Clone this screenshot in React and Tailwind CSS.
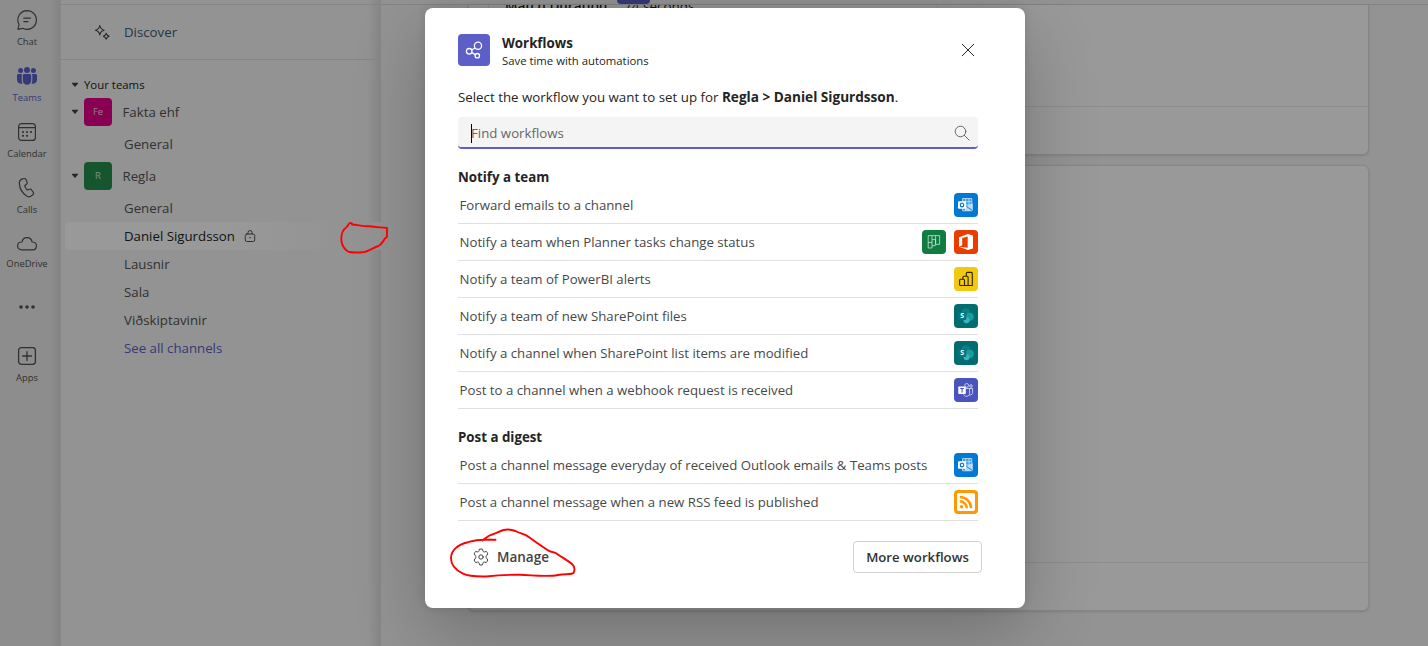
import React from "react";

const stroke = { fill: "none", stroke: "currentColor", strokeLinecap: "round", strokeLinejoin: "round" };

function ChatIcon() {
  return (
    <svg viewBox="0 0 20 20" className="size-5" {...stroke} strokeWidth="1.2">
      <path d="M10 .6a9.4 9.4 0 1 1-4.4 17.7L1 19.3l1-4.8A9.4 9.4 0 0 1 10 .6Z" />
      <path d="M6.8 8.2h6.6M6.8 11.6h4.2" />
    </svg>
  );
}

function TeamsIcon() {
  return (
    <svg viewBox="0 0 20 20" className="size-5" fill="currentColor">
      <circle cx="10" cy="4" r="3" />
      <circle cx="3.6" cy="4.6" r="2.5" />
      <circle cx="16.4" cy="4.6" r="2.5" />
      <path d="M7.4 8h5.2c.9 0 1.6.7 1.6 1.6v4.9a4.2 4.2 0 0 1-8.4 0V9.6C5.8 8.7 6.5 8 7.400 8Z" />
      <path d="M1.400 8h3.700c-.3.500-.4 1-.4 1.600v4.900c0 1.300.4 2.300 1 3.200C2.700 18.300 0 16.800 0 13.800V9.400C0 8.600.6 8 1.400 8ZM18.600 8h-3.700c.3.500.4 1 .4 1.600v4.900c0 1.300-.4 2.300-1 3.200 3 .6 5.700-.9 5.700-3.900V9.400c0-.8-.6-1.400-1.400-1.400Z" />
    </svg>
  );
}

function CalendarIcon() {
  return (
    <svg viewBox="0 0 20 20" className="size-5" {...stroke} strokeWidth="1.2">
      <rect x="1.600" y="1.600" width="16.800" height="16.800" rx="3" />
      <path d="M1.600 5.600h16.800" />
      <g fill="currentColor" stroke="none">
        <circle cx="6" cy="10" r="1.100" /><circle cx="10" cy="10" r="1.100" /><circle cx="14" cy="10" r="1.100" />
        <circle cx="6" cy="13.800" r="1.100" /><circle cx="10" cy="13.800" r="1.100" />
      </g>
    </svg>
  );
}

function CallsIcon() {
  return (
    <svg viewBox="0 0 20 20" className="size-5" {...stroke} strokeWidth="1.200">
      <path d="m5.400.9 1.400-.3c.9-.3 1.800.2 2.200 1l1 2.300c.3.800.1 1.700-.5 2.300L7.700 7.700c.3 1.600 1.300 3.200 2.600 4.300l2.200-.7c.8-.3 1.600 0 2.100.7l1.500 2c.6.800.5 1.800-.2 2.500l-.9.900c-1.300 1.400-3.300 1.900-5 .9C5.300 15.400 2.600 10.800 2.300 5.400 2.200 3.200 3.600 1.500 5.400.9Z" />
    </svg>
  );
}

function CloudIcon() {
  return (
    <svg viewBox="0 0 20 20" className="size-5" {...stroke} strokeWidth="1.200">
      <path d="M5 8c.4-2.700 2.500-4.400 5-4.400S14.700 5.300 15.100 8h.3c2.300 0 4 1.700 4 3.900s-1.700 3.900-4 3.900H4.600c-2.300 0-4-1.700-4-3.900S2.300 8 4.600 8H5Z" />
    </svg>
  );
}

function MoreIcon() {
  return (
    <svg viewBox="0 0 20 20" className="size-5" fill="currentColor">
      <circle cx="4" cy="10" r="1.800" /><circle cx="10" cy="10" r="1.800" /><circle cx="16" cy="10" r="1.800" />
    </svg>
  );
}

function AppsIcon() {
  return (
    <svg viewBox="0 0 20 20" className="size-5" {...stroke} strokeWidth="1.300">
      <rect x="1.600" y="1.600" width="16.800" height="16.800" rx="2.800" />
      <path d="M10 5.600v8.800M5.600 10h8.800" />
    </svg>
  );
}

function SparkleIcon() {
  return (
    <svg viewBox="0 0 16 16" className="size-4" {...stroke} strokeWidth="1.100">
      <path d="M5.800 1.500c.5 2.700 1.500 3.900 4.400 4.700-2.900.8-3.900 2-4.400 4.700C5.300 8.200 4.300 7 1.400 6.200c2.900-.8 3.900-2 4.400-4.700ZM12.200 9.300c.5 1.700 1.100 2.400 2.900 2.900-1.800.5-2.400 1.200-2.900 2.900-.5-1.700-1.100-2.400-2.900-2.900 1.800-.5 2.400-1.200 2.900-2.900Z" />
    </svg>
  );
}

function Caret() {
  return (
    <svg viewBox="0 0 8 6" className="h-1.5 w-2 shrink-0 text-[#424242]" fill="currentColor">
      <path d="M1.500.8h5c.5 0 .8.500.4.900L4.500 4.500a.7.700 0 0 1-1 0L1.100 1.700c-.4-.4-.1-.9.400-.9Z" />
    </svg>
  );
}

function LockIcon() {
  return (
    <svg viewBox="0 0 12 12" className="size-3" {...stroke} strokeWidth=".9">
      <rect x="1.300" y="4" width="9.400" height="7.500" rx="1.500" />
      <path d="M4 4V2.500a2 2 0 0 1 4 0V4M5.600 7.600h.8" />
    </svg>
  );
}

function FlowLogo() {
  return (
    <svg viewBox="0 0 32 32" className="size-8 shrink-0 rounded bg-[#5b5fc7]" fill="none" stroke="#fff" strokeWidth="1.300">
      <circle cx="20" cy="11.800" r="3.600" />
      <circle cx="11.200" cy="17.300" r="2.800" />
      <circle cx="19.300" cy="21.700" r="2.200" />
      <path d="m17 14-3.300 2M13.800 18.600l3.500 2" />
    </svg>
  );
}

function OutlookIcon() {
  return (
    <svg viewBox="0 0 24 24" className="size-6 rounded bg-[#0078d4]">
      <path d="M8.500 5.500h9.300v12.300H8.500Z" fill="#3f9ae0" />
      <path d="M8.500 5.500h9.300v12.300h-9.300ZM8.500 8.700h9.300M8.500 11.900h9.300M11.700 5.500v12M15 5.500v12" fill="none" stroke="#c5e2f7" strokeWidth=".8" />
      <path d="m11.500 13.500 7.300-3.200v7.500h-8Z" fill="#d8ebf9" opacity=".75" />
      <path d="m12.500 13.500 5.900 4" fill="none" stroke="#0078d4" strokeWidth=".9" />
      <rect x="4" y="8.200" width="8" height="7.600" rx=".8" fill="#fff" />
      <ellipse cx="8" cy="12" rx="1.700" ry="1.900" fill="none" stroke="#0078d4" strokeWidth="1.200" />
    </svg>
  );
}

function PlannerIcon() {
  return (
    <svg viewBox="0 0 24 24" className="size-6 rounded bg-[#107c41]" fill="none" stroke="#cbe5d6" strokeWidth=".8">
      <path d="M6.200 5.600h11.400v8.800h-4V9.600M6.200 5.600V18H10V5.600M10 9.600h3.600M13.600 5.600v8.800M6.200 12.500H10M10 15.700h3.200v-1.300M13.600 9.600h0" />
    </svg>
  );
}

function OfficeIcon() {
  return (
    <svg viewBox="0 0 24 24" className="size-6 rounded bg-[#eb3c00]">
      <path d="m5 7.300 8.800-3.400 5.200 1.600v13l-5.200 1.600L5 16.800l8.700 1V6.600L8.200 7.900v7.400L5 16.800Z" fill="#fff" />
    </svg>
  );
}

function PowerBiIcon() {
  return (
    <svg viewBox="0 0 24 24" className="size-6 rounded bg-[#f2c811]" fill="none" stroke="#2b2500" strokeWidth="1.100" strokeLinejoin="round">
      <path d="M12.300 9.200V6.400c0-.6.4-1 1-1h4c.6 0 1 .4 1 1v12.100H6.600c-.6 0-1-.4-1-1v-4.200c0-.6.4-1 1-1h2.300M8.900 12.300v-2.100c0-.6.400-1 1-1h3.200c.600 0 1 .400 1 1v8.300M8.900 12.300h.6c.600 0 1 .400 1 1v5.200" />
    </svg>
  );
}

function SharePointIcon() {
  return (
    <svg viewBox="0 0 24 24" className="size-6 rounded bg-[#036c70]">
      <circle cx="11.800" cy="8.700" r="4.500" fill="#0b7f83" />
      <circle cx="15.700" cy="12.800" r="4.100" fill="#1a9ba1" />
      <circle cx="12.500" cy="16.300" r="3" fill="#37b6c0" />
      <rect x="4.300" y="8" width="8" height="8" rx=".8" fill="#03787c" />
      <text x="8.300" y="14.400" textAnchor="middle" fontSize="7" fontWeight="700" fontFamily="Open Sans, sans-serif" fill="#fff">S</text>
    </svg>
  );
}

function TeamsAppIcon() {
  return (
    <svg viewBox="0 0 24 24" className="size-6 rounded bg-[#4b53bc]">
      <g fill="none" stroke="#d5d7f5" strokeWidth=".9">
        <circle cx="12.700" cy="7.400" r="1.900" />
        <circle cx="17" cy="8" r="1.300" />
        <path d="M12 10.500h3.600v4.700c0 2-1.200 3.100-3 3.100s-2.700-.8-3-2M15.600 10.500h3v4c0 1.800-1.200 2.700-3.100 2.500" />
      </g>
      <rect x="4.300" y="8.500" width="7.500" height="7.500" rx=".7" fill="#fff" />
      <path d="M6.200 10.500h3.700M8.050 10.500v4" stroke="#4b53bc" strokeWidth="1.100" />
    </svg>
  );
}

function RssIcon() {
  return (
    <svg viewBox="0 0 24 24" className="size-6 rounded bg-[#ff9900]">
      <rect x="3" y="3" width="18" height="18" rx="1.800" fill="#fff" />
      <circle cx="7.600" cy="16.700" r="1.800" fill="#ff9900" />
      <path d="M5.800 11.300a7 7 0 0 1 7 7M5.800 7a11.300 11.300 0 0 1 11.300 11.300" fill="none" stroke="#ff9900" strokeWidth="2.500" />
    </svg>
  );
}

function GearIcon() {
  return (
    <svg viewBox="0 0 20 20" className="size-5" {...stroke} strokeWidth="1">
      <circle cx="10" cy="10" r="2.200" />
      <path d="M8.500 2.200c1-.3 2-.3 3 0l.4 1.700c.2.800 1 1.200 1.700 1l1.700-.5c.7.700 1.200 1.500 1.500 2.500l-1.300 1.900c-.6.600-.6 1.700 0 2.300l1.300 1.900c-.3 1-.8 1.900-1.500 2.600l-1.700-.5c-.8-.200-1.500.300-1.700 1l-.4 1.700c-1 .3-2 .3-3 0l-.4-1.700c-.2-.7-1-1.200-1.700-1l-1.700.5c-.7-.7-1.200-1.600-1.500-2.600l1.300-1.900c.6-.6.6-1.700 0-2.300L3.200 6.900c.3-1 .8-1.800 1.500-2.500l1.700.5c.7.200 1.500-.2 1.700-1Z" />
    </svg>
  );
}

const RAIL = [
  { label: "Chat", Icon: ChatIcon },
  { label: "Teams", Icon: TeamsIcon, active: true },
  { label: "Calendar", Icon: CalendarIcon },
  { label: "Calls", Icon: CallsIcon },
];

function RailItem({ label, Icon, active }) {
  return (
    <div className={`flex h-14 flex-col items-center pt-2.5 ${active ? "text-[#5b5fc7]" : "text-[#525252]"}`}>
      <Icon />
      <span className="mt-1 text-[9.4px] leading-4">{label}</span>
    </div>
  );
}

function Rail() {
  return (
    <nav className="w-[60px] shrink-0 bg-linear-to-r from-[#ebebeb] from-85% to-[#dcdcdc] pr-[6px]">
      {RAIL.map((item) => <RailItem key={item.label} {...item} />)}
      <div className="flex h-[73px] flex-col items-center pt-2.5 text-[#525252]">
        <CloudIcon />
        <span className="mt-0.5 text-[9.4px] leading-4">OneDrive</span>
      </div>
      <div className="flex h-[39px] justify-center text-[#525252]"><MoreIcon /></div>
      <RailItem label="Apps" Icon={AppsIcon} />
    </nav>
  );
}

function Team({ name, initials, color }) {
  return (
    <div className="flex h-9 items-center pl-[10px]">
      <Caret />
      <span className={`ml-[5px] flex size-7 items-center justify-center rounded pt-px text-[9.4px] text-white/80 ${color}`}>{initials}</span>
      <span className="ml-[10.5px] pt-[2px] text-[13.25px] text-[#525252]">{name}</span>
    </div>
  );
}

function Channel({ name, className = "text-[#525252]", children }) {
  return (
    <div className={`ml-1 flex h-7 items-center rounded-l pl-[59px] text-[13.25px] ${className}`}>
      <span className="pt-[2px]">{name}</span>
      {children}
    </div>
  );
}

function TeamList() {
  return (
    <aside className="flex w-[321px] shrink-0 flex-col border-l border-[#e2e2e2] bg-linear-to-r from-[#f5f5f5] from-96% to-[#e0e0e0]">
      <div className="h-[5px] border-b border-[#dfdfdf]" />
      <div className="flex h-[55px] items-center gap-[14px] border-b border-[#dfdfdf] pl-[33px] text-[13.25px]">
        <span className="text-[#424242]"><SparkleIcon /></span>
        <span className="pt-[2px] text-[#3d5a78]">Discover</span>
      </div>
      <div className="mt-3 flex h-[22px] items-center pt-1 pl-[10px] text-[11.4px] text-[#242424]">
        <Caret />
        <span className="ml-[5px]">Your teams</span>
      </div>
      <Team name="Fakta ehf" initials="Fe" color="bg-[#e3008c]" />
      <Channel name="General" />
      <Team name="Regla" initials="R" color="bg-[#258f4f]" />
      <Channel name="General" />
      <Channel name="Daniel Sigurdsson" className="bg-linear-to-r from-white from-50% to-[#f5f5f5] to-90% text-[#242424]">
        <span className="ml-[9px] text-[#424242]"><LockIcon /></span>
      </Channel>
      <Channel name="Lausnir" />
      <Channel name="Sala" />
      <Channel name="Viðskiptavinir" />
      <Channel name="See all channels" className="text-[#5b5fc7]" />
    </aside>
  );
}

function Feed() {
  return (
    <main className="flex flex-1 flex-col overflow-hidden bg-[#f5f5f5]">
      <div className="flex h-[5px] shrink-0 border-b border-[#dadada] pl-[236px]">
        <div className="h-[4px] w-[33px] rounded-b bg-[#5b5fc7]" />
      </div>
      <div className="mr-[59px] ml-[87px] flex flex-1 flex-col gap-[10px]">
        <section className="flex h-[150px] shrink-0 flex-col rounded-b-md border border-t-0 border-[#dedede] bg-white shadow-sm">
          <div className="flex h-[102px] overflow-hidden border-b border-[#ebebeb] pl-[19px]">
            <div className="flex w-[450px] border-x border-[#ebebeb] pl-4 text-[13.5px] text-[#242424]">
              <span className="-mt-[9px] w-[119px] font-semibold">Match Duration</span>
              <span className="-mt-[9px]">74 seconds</span>
            </div>
          </div>
        </section>
        <section className="flex h-[446px] shrink-0 flex-col rounded-md border border-[#e2e2e2] bg-white shadow-sm">
          <div className="h-[397px] border-b border-[#ebebeb]" />
        </section>
      </div>
    </main>
  );
}

function Row({ label, icons }) {
  return (
    <div className="flex h-[37px] items-center gap-2 border-b border-[#e0e0e0]">
      <span className="flex-1 pt-[2px] pl-[1.5px] text-[13.22px] text-[#484848]">{label}</span>
      {icons.map((Icon, i) => <Icon key={i} />)}
    </div>
  );
}

function Dialog() {
  return (
    <div className="flex h-[600px] w-[600px] flex-col rounded-lg bg-white pt-[26px] pr-[47px] pl-[33px] text-[#242424] shadow-[0_0_8px_rgba(0,0,0,.12),0_24px_72px_rgba(0,0,0,.24)]">
      <header className="flex h-8 items-center gap-3">
        <FlowLogo />
        <div className="flex-1 pt-[3px]">
          <h1 className="text-[13.3px] leading-[18px] font-bold">Workflows</h1>
          <p className="text-[11.33px] leading-[17px]">Save time with automations</p>
        </div>
        <svg viewBox="0 0 20 20" className="size-5" {...stroke} strokeWidth="1">
          <path d="m4.200 4.200 11.600 11.600M15.800 4.200 4.200 15.800" />
        </svg>
      </header>
      <p className="mt-[21px] text-[13.3px] leading-5 whitespace-nowrap">
        Select the workflow you want to set up for <b className="text-[13.6px]">Regla &gt; Daniel Sigurdsson</b>.
      </p>
      <div className="mt-[10px] flex h-8 w-[520px] items-center justify-between rounded border-b-2 border-[#5b5fc7] bg-[#f4f4f4] pr-[6px] pl-[13px] text-[#666]">
        <span className="relative pt-[3px] text-[13.25px]">
          <span className="absolute top-[3px] left-0 h-[19px] w-px bg-black" />
          Find workflows
        </span>
        <svg viewBox="0 0 20 20" className="mt-px size-5" {...stroke} strokeWidth="1">
          <circle cx="8.500" cy="8.500" r="5.300" />
          <path d="m12.400 12.400 4.600 4.600" />
        </svg>
      </div>
      <h2 className="mt-[18px] text-[13.3px] leading-5 font-bold">Notify a team</h2>
      <Row label="Forward emails to a channel" icons={[OutlookIcon]} />
      <Row label="Notify a team when Planner tasks change status" icons={[PlannerIcon, OfficeIcon]} />
      <Row label="Notify a team of PowerBI alerts" icons={[PowerBiIcon]} />
      <Row label="Notify a team of new SharePoint files" icons={[SharePointIcon]} />
      <Row label="Notify a channel when SharePoint list items are modified" icons={[SharePointIcon]} />
      <Row label="Post to a channel when a webhook request is received" icons={[TeamsAppIcon]} />
      <h2 className="mt-[18px] text-[13.3px] leading-5 font-bold">Post a digest</h2>
      <Row label="Post a channel message everyday of received Outlook emails &amp; Teams posts" icons={[OutlookIcon]} />
      <Row label="Post a channel message when a new RSS feed is published" icons={[RssIcon]} />
      <footer className="mt-5 -mr-1 flex h-8 items-center justify-between font-semibold text-[#424242]">
        <button className="flex items-center gap-[6px] pl-[13px] text-[13.5px]"><GearIcon /><span className="pt-px">Manage</span></button>
        <button className="h-8 w-[129px] rounded border border-[#d1d1d1] bg-white pt-[2px] text-[13.2px] text-[#333]">More workflows</button>
      </footer>
    </div>
  );
}

function Annotations() {
  return (
    <svg viewBox="0 0 1428 646" className="pointer-events-none absolute inset-0 h-full w-full" fill="none" stroke="#f00" strokeWidth="1.900" strokeLinecap="round" strokeLinejoin="round">
      <path d="M352 223.500c-1.500-1-3-.5-3.500 1-.5 2-2.500 3-4.500 5-2.500 3-3 7-2.500 12 .5 4.500 4 9 7.500 10.500 5 .8 11 .5 15.500 0 6-1.500 9-4.500 14-6 3-1.500 4-4 6.500-7.500 1-1 2-1 2-2v-8.500c-8-.8-12-.8-17.500-1.800-6 .3-11-1.200-17.500-1.700" />
      <path d="M495.500 539.700H486c-11-.2-13 1-18 2.500-11 2.300-17 9-17 16 0 7 5 12 12 15.500 6 3 13 3 23 2.800 9-1 19-2 34-1.700 15 .6 27 2.300 38 .2 7-1.200 14-.5 15.500-2 2-4 1.200-6.500-1.500-9-5-4-10-6.500-15.500-10.500-3-2-6.500-1-9-3.500-6-4-12-8-18-12.500-5.500-4.500-9-3.500-14-6.500-4-1.500-7-2.200-12-1-5 1.500-8 4-12 4.700-4 1.300-6 3.500-9 5.800" />
    </svg>
  );
}

export default function App() {
  return (
    <div className="relative flex h-[646px] w-[1428px] overflow-hidden font-['Open_Sans',sans-serif]">
      <Rail />
      <TeamList />
      <Feed />
      <div className="absolute inset-0 flex items-start bg-black/40 pt-2 pl-[425px]">
        <Dialog />
      </div>
      <Annotations />
    </div>
  );
}
